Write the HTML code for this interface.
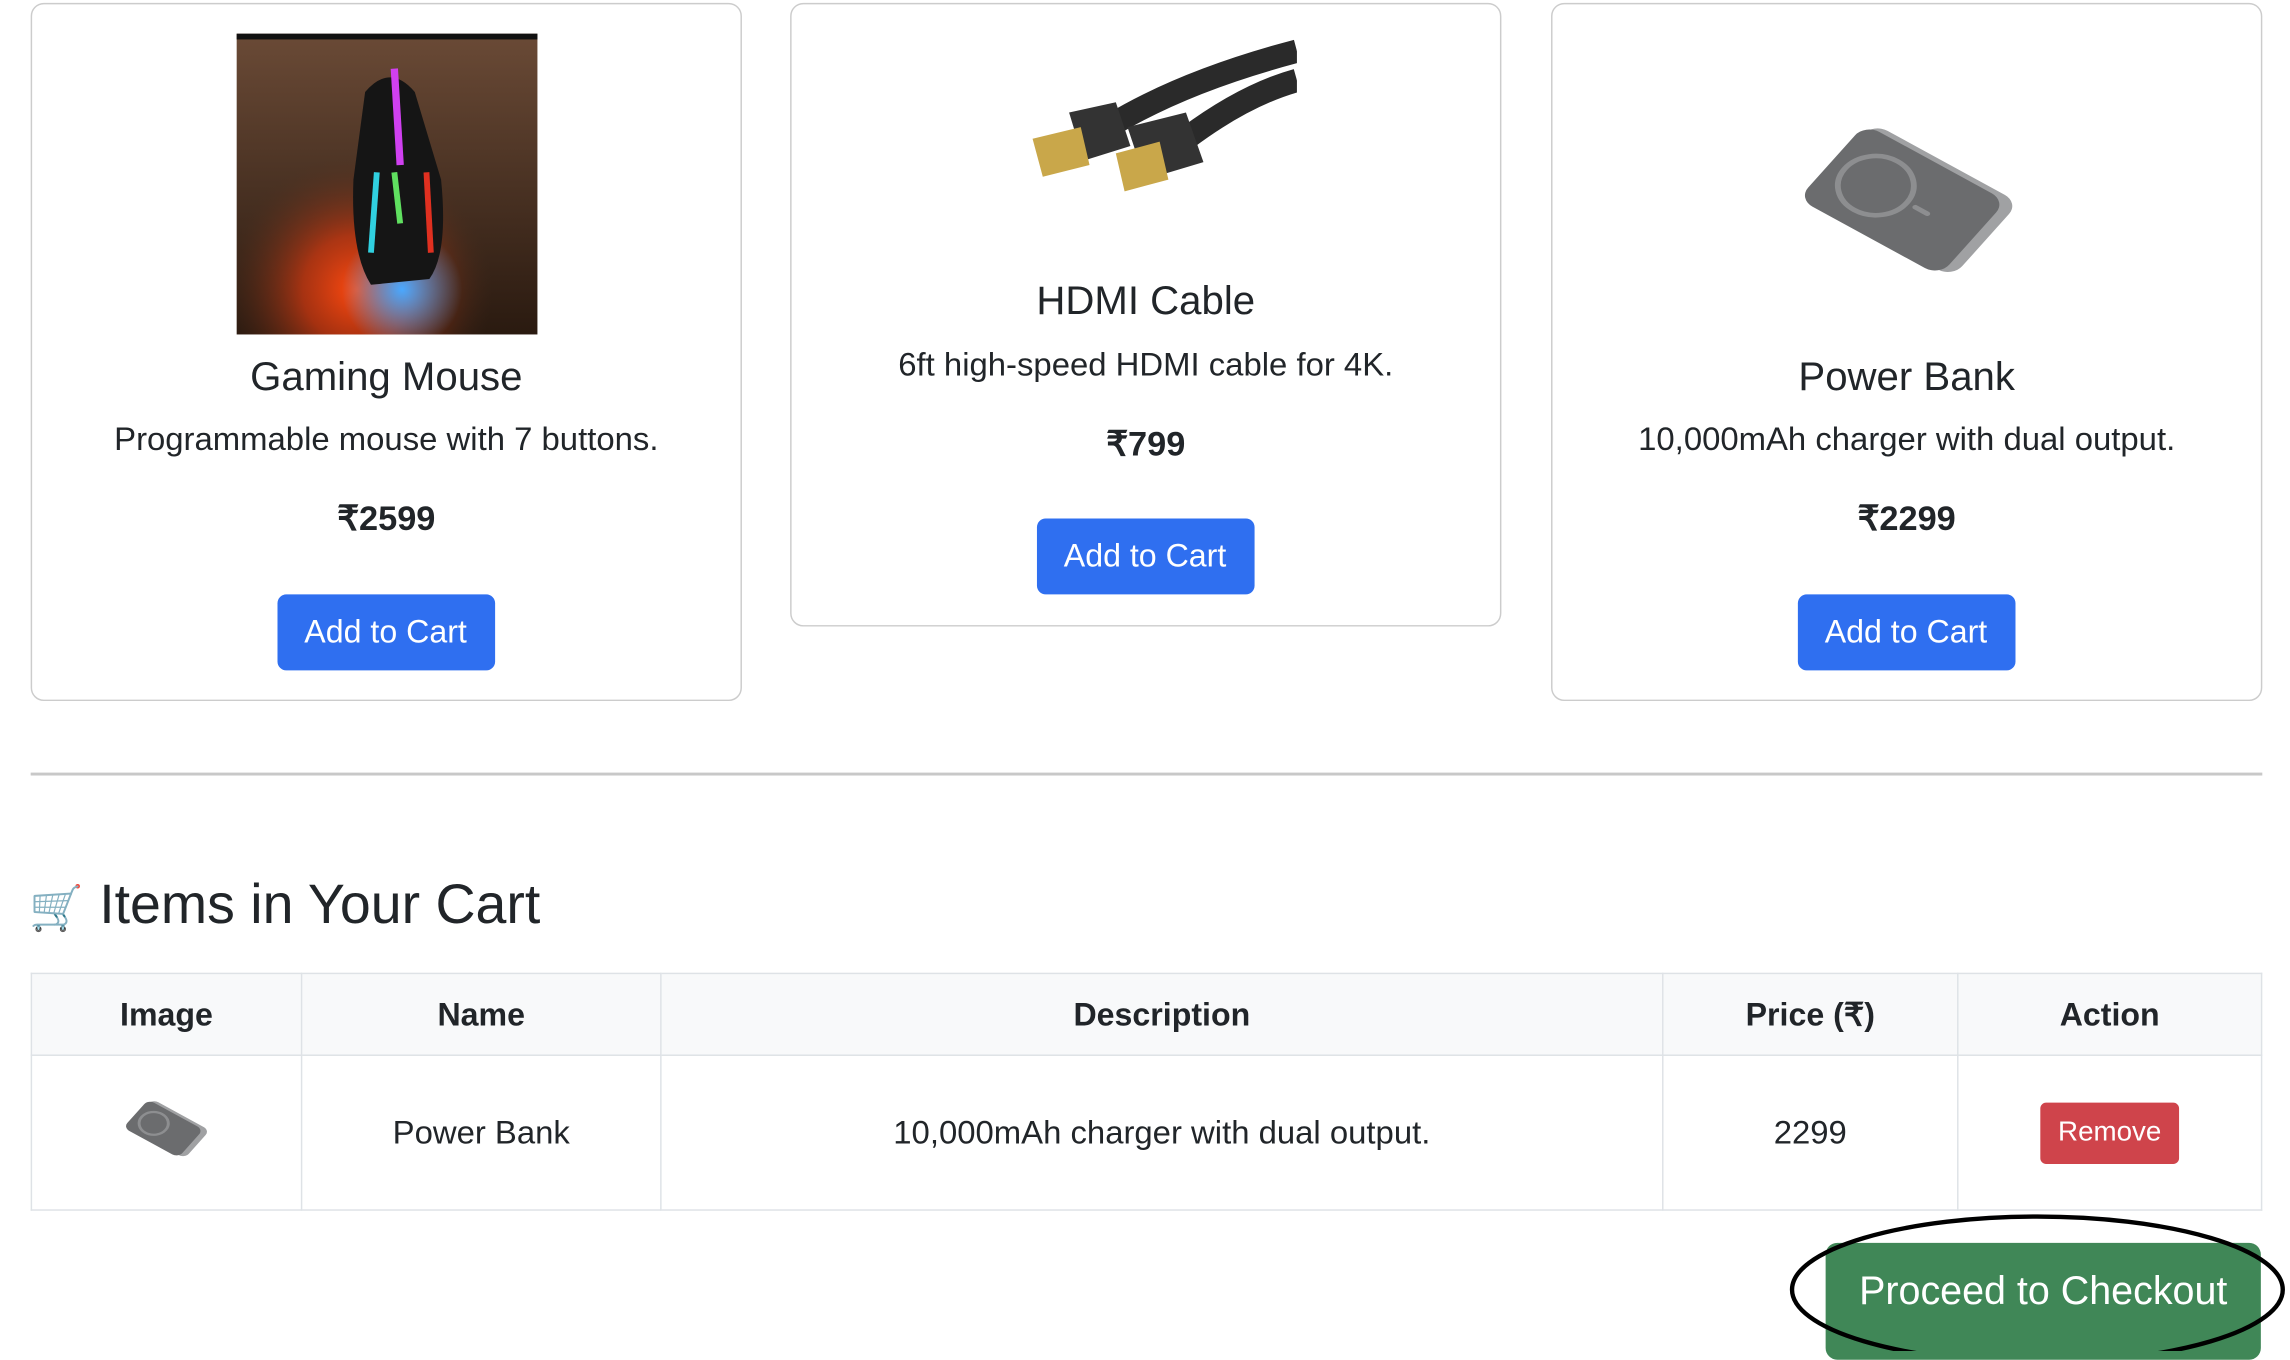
<!DOCTYPE html>
<html><head><meta charset="utf-8"><style>
html,body{margin:0;padding:0;background:#fff;overflow:hidden;width:2290px;height:1338px}
#w{position:absolute;left:0;top:0;width:1568px;height:916px;transform:scale(1.4605);transform-origin:0 0;font-family:"Liberation Sans",sans-serif;color:#212529}
.card{position:absolute;border:1.5px solid #ccc;border-radius:9px;box-sizing:border-box;text-align:center}
.t{position:absolute;left:0;right:0;font-size:27.5px;line-height:30px}
.d{position:absolute;left:0;right:0;font-size:22.5px;line-height:24px}
.p{position:absolute;left:0;right:0;font-size:23.5px;font-weight:bold;line-height:24px}
.b{position:absolute;width:149px;height:52px;background:#2f6ff0;color:#fff;border-radius:6px;font-size:22px;line-height:52px;left:50%;margin-left:-75px}
.abs{position:absolute}
table{position:absolute;left:21px;top:666px;width:1528px;border-collapse:collapse;font-size:22.5px}
td,th{border:1.2px solid #dee2e6;text-align:center;padding:0}
th{background:#f8f9fa;height:55px;font-weight:bold;font-size:22px}
td{height:105px}
</style></head><body><div id="w">

<div class="card" style="left:21px;top:2px;width:487px;height:478px">
 <svg class="abs" style="left:140px;top:20px" width="206" height="206" viewBox="0 0 206 206">
  <defs><radialGradient id="g1" cx="0.4" cy="0.85" r="0.45"><stop offset="0" stop-color="#ff4a10"/><stop offset="0.4" stop-color="#d83a10" stop-opacity=".7"/><stop offset="1" stop-color="#4a2e1e" stop-opacity="0"/></radialGradient>
  <radialGradient id="g2" cx="0.55" cy="0.85" r="0.2"><stop offset="0" stop-color="#4aa8ff"/><stop offset="1" stop-color="#4aa8ff" stop-opacity="0"/></radialGradient>
  <linearGradient id="g0" x1="0" y1="0" x2="0" y2="1"><stop offset="0" stop-color="#6a4a36"/><stop offset="1" stop-color="#2a1a10"/></linearGradient></defs>
  <rect width="206" height="206" fill="url(#g0)"/>
  <rect width="206" height="4" fill="#111"/>
  <rect width="206" height="206" fill="url(#g1)"/>
  <rect width="206" height="206" fill="url(#g2)"/>
  <path d="M88 40 Q105 20 122 40 L140 100 Q145 150 132 168 L92 172 Q78 150 80 100 Z" fill="#151515"/>
  <path d="M108 24 L112 90" stroke="#d040f0" stroke-width="5"/>
  <path d="M96 95 L92 150" stroke="#30d0e0" stroke-width="4"/>
  <path d="M130 95 L133 150" stroke="#e03020" stroke-width="4"/>
  <path d="M108 95 L112 130" stroke="#60e060" stroke-width="4"/>
 </svg>
 <div class="t" style="top:240px">Gaming Mouse</div>
 <div class="d" style="top:286px">Programmable mouse with 7 buttons.</div>
 <div class="p" style="top:340px">₹2599</div>
 <div class="b" style="top:404px">Add to Cart</div>
</div>

<div class="card" style="left:541px;top:2px;width:487px;height:427px">
 <svg class="abs" style="left:160px;top:22px" width="186" height="110" viewBox="0 0 186 110">
  <path d="M60 60 Q110 30 186 10" stroke="#2a2a2a" stroke-width="16" fill="none"/>
  <path d="M110 70 Q150 40 186 30" stroke="#2a2a2a" stroke-width="16" fill="none"/>
  <path d="M30 52 L62 45 L72 75 L40 85 Z" fill="#333"/>
  <path d="M5 70 L38 62 L44 88 L12 96 Z" fill="#c9a74a"/>
  <path d="M70 62 L110 52 L122 86 L82 98 Z" fill="#333"/>
  <path d="M62 80 L92 72 L98 98 L68 106 Z" fill="#c9a74a"/>
 </svg>
 <div class="t" style="top:188px">HDMI Cable</div>
 <div class="d" style="top:235px">6ft high-speed HDMI cable for 4K.</div>
 <div class="p" style="top:289px">₹799</div>
 <div class="b" style="top:352px">Add to Cart</div>
</div>

<div class="card" style="left:1062px;top:2px;width:487px;height:478px">
 <svg class="abs" style="left:148px;top:62px" width="190" height="145" viewBox="0 0 190 145">
  <g transform="translate(95,72) scale(1,0.78) rotate(-55)">
   <rect x="-38" y="-58" width="80" height="122" rx="12" fill="#a0a1a3"/>
   <rect x="-42" y="-62" width="80" height="118" rx="12" fill="#6b6c6e"/>
   <circle cx="-2" cy="-25" r="26" fill="none" stroke="#8d8e90" stroke-width="4"/>
   <rect x="-4" y="6" width="4" height="14" rx="2" fill="#8d8e90"/>
  </g>
 </svg>
 <div class="t" style="top:240px">Power Bank</div>
 <div class="d" style="top:286px">10,000mAh charger with dual output.</div>
 <div class="p" style="top:340px">₹2299</div>
 <div class="b" style="top:404px">Add to Cart</div>
</div>

<div class="abs" style="left:21px;top:529px;width:1528px;height:1.5px;background:#c8c8c8"></div>

<div class="abs" style="left:20px;top:598px;font-size:38px;line-height:44px;white-space:nowrap"><span style="font-size:30px">🛒</span> Items in Your Cart</div>

<table>
<tr><th style="width:184px">Image</th><th style="width:245px">Name</th><th style="width:685px">Description</th><th style="width:201px">Price (₹)</th><th>Action</th></tr>
<tr><td><svg width="68" height="52" viewBox="0 0 68 52"><g transform="translate(34,26) scale(1,0.78) rotate(-55)"><rect x="-14" y="-23" width="30" height="48" rx="5" fill="#a0a1a3"/><rect x="-16" y="-25" width="30" height="46" rx="5" fill="#6b6c6e"/><circle cx="-1" cy="-10" r="10" fill="none" stroke="#8d8e90" stroke-width="2"/></g></svg></td>
<td>Power Bank</td><td>10,000mAh charger with dual output.</td><td>2299</td>
<td><span style="display:inline-block;width:95px;height:42px;line-height:42px;background:#cf444b;color:#fff;border-radius:4px;font-size:19px">Remove</span></td></tr>
</table>

<div class="abs" style="left:1250px;top:851px;width:298px;height:80px;background:#408757;border-radius:8px;color:#fff;font-size:27px;line-height:66px;text-align:center">Proceed to Checkout</div>
<svg class="abs" style="left:1220px;top:825px" width="350" height="100"><ellipse cx="175" cy="58" rx="168" ry="50" fill="none" stroke="#000" stroke-width="3"/></svg>

</div></body></html>
